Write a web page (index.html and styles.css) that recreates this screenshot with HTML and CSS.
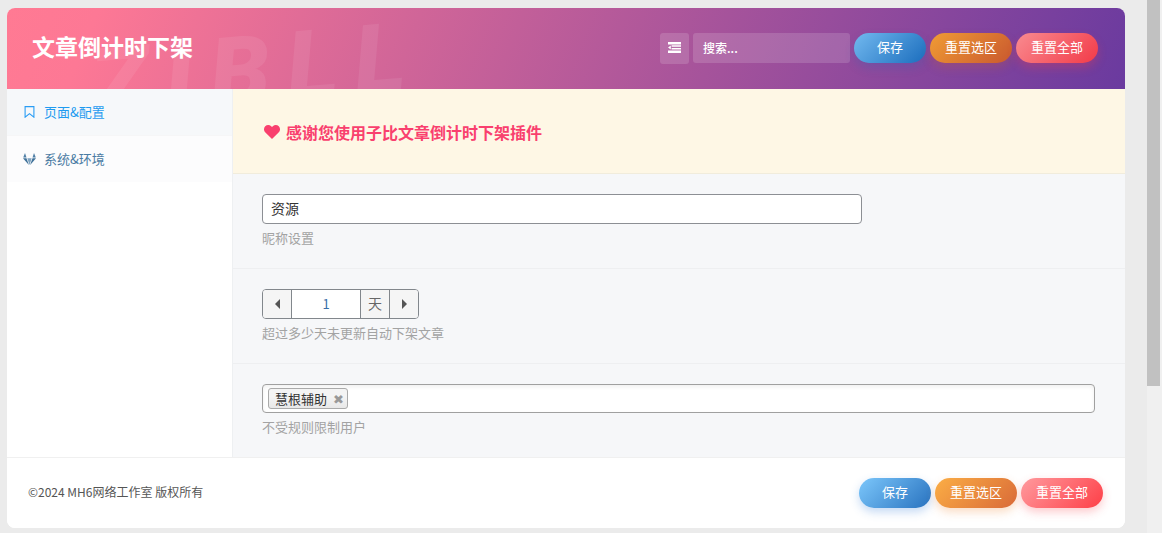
FILE: index.html
```html
<!DOCTYPE html>
<html lang="zh-CN">
<head>
<meta charset="utf-8">
<title>文章倒计时下架</title>
<link rel="stylesheet" href="styles.css">
</head>
<body>
<div class="page">
  <div class="card">
    <header class="head">
      <span class="watermark">ZIBLL</span>
      <h1 class="title">文章倒计时下架</h1>
      <div class="tools">
        <span class="toggle">
          <svg width="13" height="11" viewBox="0 0 13 11"><path fill="#fff" d="M0 0h13v2.400H0zM3.600 3.300h9.400v1.500H3.600zM3.600 5.900h9.400v1.500H3.600zM0 8.500h13V11H0zM2.800 3.400v4L0 5.400z"/></svg>
        </span>
        <span class="search">搜索...</span>
        <span class="btn btn-blue">保存</span>
        <span class="btn btn-orange">重置选区</span>
        <span class="btn btn-red">重置全部</span>
      </div>
    </header>
    <div class="main">
      <nav class="side">
        <div class="nav nav-on">
          <svg class="nav-ico" width="13" height="12" viewBox="-1.500 0 13 12"><path fill="none" stroke="#2a9df4" stroke-width="1.100" d="M.6.6h8.800v10.600L5 7.600.6 11.200z"/></svg>
          <span>页面&amp;配置</span>
        </div>
        <div class="nav">
          <svg class="nav-ico" width="13" height="12" viewBox="0 0 13 12"><path fill="#4f7fa6" d="M.2 4.400 2 0l1.500 4.400zM12.800 4.400 11 0 9.500 4.400z"/><path fill="#3f7199" d="M0 5.200h3.500L5.900 12z"/><path fill="#3f7199" d="M13 5.200H9.500L7.100 12z"/><path fill="#7ea3c0" d="M4.300 5.200h4.400L6.500 12z"/></svg>
          <span>系统&amp;环境</span>
        </div>
      </nav>
      <section class="content">
        <div class="notice">
          <svg width="16" height="14" viewBox="0 0 16 14"><path fill="#f9406e" d="M8 14 1.400 7.600C-.5 5.700-.4 2.900 1.200 1.300 2.900-.4 5.600-.3 7.200 1.300L8 2.100l.8-.8c1.600-1.600 4.300-1.700 6 0 1.600 1.600 1.700 4.400-.2 6.300z"/></svg>
          <span>感谢您使用子比文章倒计时下架插件</span>
        </div>
        <div class="field field-a">
          <div class="input">资源</div>
          <p class="hint">昵称设置</p>
        </div>
        <div class="field field-a">
          <div class="spinner">
            <span class="spin-btn spin-first"><i class="arrow arrow-l"></i></span>
            <span class="spin-val">1</span>
            <span class="spin-unit">天</span>
            <span class="spin-btn spin-last"><i class="arrow arrow-r"></i></span>
          </div>
          <p class="hint">超过多少天未更新自动下架文章</p>
        </div>
        <div class="field field-b">
          <div class="tags"><span class="tag">慧根辅助<b class="tag-x">✖</b></span></div>
          <p class="hint">不受规则限制用户</p>
        </div>
      </section>
    </div>
    <footer class="foot">
      <span class="copy">©2024 MH6网络工作室 版权所有</span>
      <div class="tools foot-tools">
        <span class="btn btn-blue2">保存</span>
        <span class="btn btn-orange2">重置选区</span>
        <span class="btn btn-red2">重置全部</span>
      </div>
    </footer>
  </div>
  <div class="scroll"><div class="thumb"></div></div>
</div>
</body>
</html>
```
FILE: styles.css
```css
* { box-sizing: border-box; }
html, body { margin: 0; height: 100%; overflow: hidden; }
body {
  background: #ebebeb;
  font-family: "Noto Sans CJK SC", "Liberation Sans", sans-serif;
  font-size: 13px;
  color: #555;
}
.page { display: flex; height: 533px; padding-left: 7px; }
.card {
  width: 1118px;
  height: 520px;
  margin-top: 8px;
  background: #fff;
  border-radius: 8px;
  overflow: hidden;
  display: flex;
  flex-direction: column;
}
.scroll { width: 15px; margin-left: 22px; height: 533px; background: #f0f0f0; }
.thumb { width: 13px; height: 386px; background: #c1c1c1; }

.head {
  position: relative;
  height: 81px;
  flex: none;
  display: flex;
  align-items: center;
  justify-content: space-between;
  padding: 0 27px 0 25px;
  overflow: hidden;
  background: linear-gradient(112deg, #ff7a93 0%, #fd7895 8%, #6a3a9f 100%);
}
.watermark {
  position: absolute;
  left: 84px;
  top: 14px;
  font: italic 900 96px/1 Roboto, "Liberation Sans", sans-serif;
  letter-spacing: 17px;
  color: rgba(255,255,255,.08);
  transform: rotate(-5deg);
}
.title {
  position: relative;
  margin: 0 0 6px;
  font-size: 23px;
  line-height: 32px;
  font-weight: 700;
  color: #fff;
}
.tools { position: relative; display: flex; align-items: flex-start; gap: 4px; }
.toggle {
  width: 29px;
  height: 31px;
  border-radius: 3px;
  background: rgba(255,255,255,.15);
  display: flex;
  align-items: center;
  justify-content: center;
  padding-bottom: 3px;
}
.search {
  width: 157px;
  height: 30px;
  padding-left: 10px;
  border-radius: 3px;
  background: rgba(255,255,255,.15);
  color: #fff;
  font-size: 12px;
  font-weight: 500;
  line-height: 29px;
}
.btn {
  height: 30px;
  border-radius: 15px;
  color: #fff;
  font-size: 13px;
  line-height: 28px;
  text-align: center;
  white-space: nowrap;
}
.btn-blue { width: 72px; background: linear-gradient(135deg, #72b9ef, #1b6dbd); box-shadow: 0 5px 10px rgba(40,100,180,.25); }
.btn-orange { width: 82px; background: linear-gradient(135deg, #f09c34, #c9582f); box-shadow: 0 5px 10px rgba(200,90,40,.25); }
.btn-red { width: 82px; background: linear-gradient(135deg, #f98b90, #f23a48); box-shadow: 0 5px 10px rgba(240,60,70,.3); }
.btn-blue2 { width: 72px; background: linear-gradient(135deg, #7cc7fb, #2872bf); box-shadow: 0 4px 10px rgba(60,130,220,.3); }
.btn-orange2 { width: 82px; background: linear-gradient(135deg, #fbae45, #d96a38); box-shadow: 0 4px 10px rgba(240,140,60,.3); }
.btn-red2 { width: 82px; background: linear-gradient(135deg, #ff9a9e, #fe3f47); box-shadow: 0 4px 10px rgba(250,80,90,.3); }

.main { display: flex; flex: none; height: 368px; }
.side {
  width: 226px;
  flex: none;
  background: #fff;
  border-right: 1px solid #eef0f2;
}
.nav {
  height: 47px;
  display: flex;
  align-items: center;
  padding-left: 16px;
  background: #fcfcfd;
  color: #4a7ba3;
  font-size: 13px;
  border-bottom: 1px solid #f6f6f7;
}
.nav span { margin-left: 8px; margin-top: -2px; }
.nav-ico { display: block; flex: none; }
.nav-on { background: #f6f8fa; color: #1f9bf0; }
.nav:last-child { border-bottom: 0; height: 46px; }

.content { flex: 1; background: #f6f7f9; min-width: 0; }
.notice {
  height: 85px;
  display: flex;
  align-items: center;
  gap: 6px;
  padding-left: 31px;
  padding-top: 1px;
  background: #fef7e5;
  border-bottom: 1px solid #f1ecdc;
  color: #f9406e;
  font-size: 16px;
  font-weight: 700;
}
.field {
  padding: 20px 29px 0;
  border-bottom: 1px solid #eeeff1;
}
.field-a { height: 95px; }
.field-b { height: 93px; border-bottom: 0; }
.input {
  width: 600px;
  height: 30px;
  padding-left: 8px;
  background: #fff;
  border: 1px solid #8c8f94;
  border-radius: 4px;
  color: #333;
  font-size: 14px;
  line-height: 26px;
}
.hint { margin: 4px 0 0; color: #a3a3a3; font-size: 13px; line-height: 19px; }
.spinner {
  display: flex;
  width: 157px;
  height: 30px;
  border: 1px solid #82878c;
  border-radius: 4px;
  overflow: hidden;
  background: #fff;
}
.spin-btn {
  flex: none;
  background: #f5f5f5;
  display: flex;
  align-items: center;
  justify-content: center;
}
.spin-first { width: 29px; border-right: 1px solid #82878c; }
.spin-last { width: 28px; }
.spin-val { width: 68px; flex: none; text-align: center; color: #3a6ea8; font-size: 13px; line-height: 28px; }
.spin-unit { width: 30px; flex: none; text-align: center; background: #f5f5f5; border-left: 1px solid #82878c; border-right: 1px solid #82878c; color: #666; font-size: 14px; line-height: 26px; }
.arrow { display: block; width: 0; height: 0; border: 5px solid transparent; }
.arrow-l { border-left: 0; border-right-color: #555; }
.arrow-r { border-right: 0; border-left-color: #555; }
.tags {
  width: 833px;
  height: 29px;
  padding: 3px 5px;
  background: #fff;
  border: 1px solid #a0a0a0;
  border-radius: 4px;
  box-shadow: inset 0 2px 4px rgba(0,0,0,.06);
}
.tag {
  display: inline-block;
  height: 21px;
  padding: 0 3px 0 6px;
  border: 1px solid #aaa;
  border-radius: 3px;
  background: linear-gradient(#f4f4f4 40%, #e8e8e8);
  color: #333;
  font-size: 13px;
  line-height: 20px;
  vertical-align: top;
}
.tag-x { margin-left: 6px; color: #999; font-size: 13px; font-family: "DejaVu Sans", sans-serif; }

.foot {
  flex: 1;
  display: flex;
  align-items: center;
  justify-content: space-between;
  padding: 0 22px 1px 21px;
  border-top: 1px solid #f0f0f0;
  background: #fff;
}
.copy { color: #555; font-size: 12px; margin-bottom: 3px; }
```
